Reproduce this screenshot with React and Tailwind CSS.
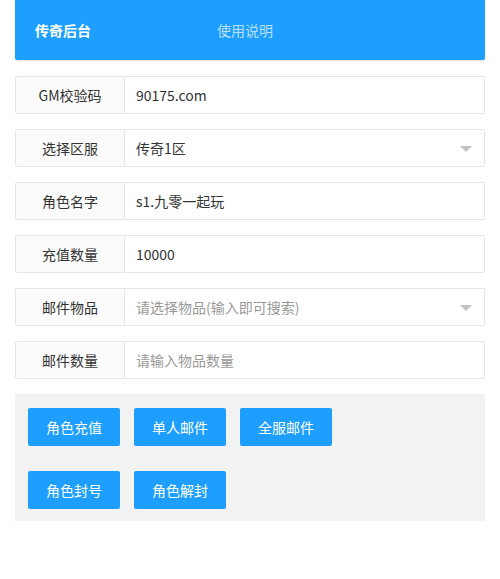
const rows = [
  { label: 'GM校验码', value: '90175.com' },
  { label: '选择区服', value: '传奇1区', select: true },
  { label: '角色名字', value: 's1.九零一起玩' },
  { label: '充值数量', value: '10000' },
  { label: '邮件物品', placeholder: '请选择物品(输入即可搜索)', select: true },
  { label: '邮件数量', placeholder: '请输入物品数量' },
];

const FormRow = ({ label, value, placeholder, select }) => (
  <div className="flex h-[38px] mb-[15px]">
    <div className="w-[110px] shrink-0 flex items-center justify-center bg-[#fbfbfb] border border-[#e6e6e6] rounded-l-[2px] text-[14px] text-[#333]">
      {label}
    </div>
    <div className="flex-1 flex items-center justify-between border border-l-0 border-[#e6e6e6] rounded-r-[2px] bg-white pl-[11px] pr-[12px] text-[14px]">
      <span className={value ? 'text-[#333]' : 'text-[#999]'}>{value || placeholder}</span>
      {select && (
        <span className="w-0 h-0 border-x-[6px] border-x-transparent border-t-[6px] border-t-[#c2c2c2] mt-[2px]" />
      )}
    </div>
  </div>
);

const Btn = ({ children }) => (
  <button className="h-[38px] px-[18px] bg-[#1e9fff] text-white text-[14px] rounded-[2px]">
    {children}
  </button>
);

export default function App() {
  return (
    <div
      className="w-[500px] min-h-[579px] bg-white px-[15px]"
      style={{ fontFamily: '"Noto Sans CJK SC", "Liberation Sans", sans-serif' }}
    >
      {/* 顶部导航 */}
      <div className="h-[60px] bg-[#1e9fff] rounded-b-[2px] shadow-sm flex items-center text-[14px]">
        <span className="pl-[20px] w-[202px] font-bold text-white">传奇后台</span>
        <span className="text-white/70">使用说明</span>
      </div>

      <div className="pt-[16px]">
        {rows.map((r) => (
          <FormRow key={r.label} {...r} />
        ))}
      </div>

      {/* 操作按钮 */}
      <div className="bg-[#f2f2f2] pt-[14px] pb-[12px] pl-[13px] flex flex-col gap-[25px]">
        <div className="flex gap-[14px]">
          <Btn>角色充值</Btn>
          <Btn>单人邮件</Btn>
          <Btn>全服邮件</Btn>
        </div>
        <div className="flex gap-[14px]">
          <Btn>角色封号</Btn>
          <Btn>角色解封</Btn>
        </div>
      </div>
    </div>
  );
}
